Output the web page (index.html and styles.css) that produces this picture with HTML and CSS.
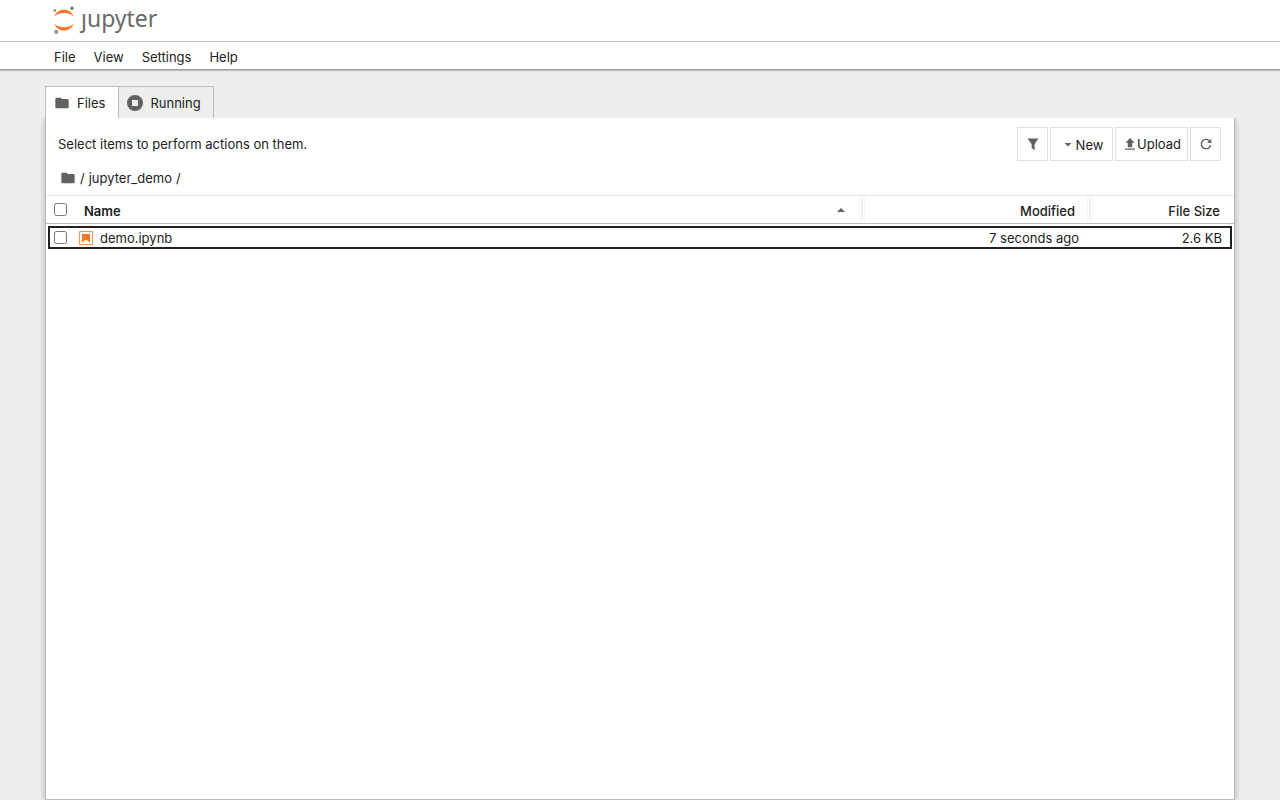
FILE: index.html
```html
<!DOCTYPE html>
<html lang="en">
<head>
<meta charset="utf-8">
<meta name="viewport" content="width=device-width, initial-scale=1">
<title>Home</title>
<link rel="stylesheet" href="styles.css">
</head>
<body>
<header class="top">
  <a class="logo" href="#" aria-label="jupyter">
    <svg class="logo-mark" viewBox="0 0 24 30" width="24" height="30" aria-hidden="true">
      <path fill="#f37726" d="M2.300 11.500C3.700 7.400 7.500 4.700 12 4.700s8.300 2.700 9.700 6.800C19.800 9.300 16.200 8 12 8s-7.800 1.300-9.700 3.500zM2.300 18.800C4.200 21 7.800 22.300 12 22.300s7.800-1.300 9.700-3.500c-1.400 4.100-5.200 6.800-9.700 6.800s-8.300-2.700-9.700-6.800z"/>
      <circle cx="20" cy="3.200" r="1.700" fill="#767677"/>
      <circle cx="2.800" cy="5.400" r="1.200" fill="#767677"/>
      <circle cx="4.200" cy="26.900" r="2.100" fill="#989798"/>
    </svg>
    <span class="logo-text">ȷupyter</span>
  </a>
</header>
<nav class="menu" aria-label="Main menu">
  <button type="button">File</button>
  <button type="button">View</button>
  <button type="button">Settings</button>
  <button type="button">Help</button>
</nav>
<main class="content">
  <div class="tabs" role="tablist">
    <button class="tab tab-current" type="button" role="tab" aria-selected="true">
      <svg viewBox="0 0 24 24" width="16" height="16" aria-hidden="true"><path fill="#616161" d="M10 4H4c-1.100 0-2 .9-2 2v12c0 1.100.9 2 2 2h16c1.100 0 2-.9 2-2V8c0-1.100-.9-2-2-2h-8l-2-2z"/></svg>
      <span>Files</span>
    </button>
    <button class="tab" type="button" role="tab" aria-selected="false">
      <svg viewBox="0 0 16 16" width="16" height="16" aria-hidden="true"><path fill="#616161" fill-rule="evenodd" d="M8 0a8 8 0 1 1 0 16A8 8 0 0 1 8 0zM5 5v6h6V5z"/></svg>
      <span>Running</span>
    </button>
  </div>
  <section class="panel">
    <div class="toolbar">
      <p class="hint">Select items to perform actions on them.</p>
      <div class="actions">
        <button class="action action-icon" type="button" aria-label="Filter">
          <svg viewBox="0 0 12 13" width="12" height="13" aria-hidden="true"><path fill="#616161" d="M.5.500h11L7.600 5.900v6.600L4.600 9.800V5.900z"/></svg>
        </button>
        <button class="action action-new" type="button">
          <svg viewBox="0 0 8 4" width="8" height="4" aria-hidden="true"><path fill="#616161" d="M.5 0h7L4 3.500z"/></svg>
          <span>New</span>
        </button>
        <button class="action action-upload" type="button">
          <svg viewBox="0 0 10 12" width="10" height="12" aria-hidden="true"><path fill="#616161" d="M5 0l4.500 4.800H7.200V9.300H2.800V4.800H.500zM0 10.500h10v1.200H0z"/></svg>
          <span>Upload</span>
        </button>
        <button class="action action-icon" type="button" aria-label="Refresh">
          <svg viewBox="0 0 18 18" width="16" height="16" aria-hidden="true"><path fill="#616161" d="M9 13.500c-2.490 0-4.500-2.010-4.500-4.500S6.510 4.500 9 4.500c1.240 0 2.360.52 3.170 1.330L10 8h5V3l-1.760 1.760A5.980 5.980 0 0 0 9 3C5.690 3 3.010 5.690 3.010 9S5.690 15 9 15a5.970 5.970 0 0 0 5.900-5h-1.520c-.46 2-2.240 3.500-4.380 3.500z"/></svg>
        </button>
      </div>
    </div>
    <nav class="crumbs" aria-label="Breadcrumbs">
      <a href="#" aria-label="Home folder"><svg viewBox="0 0 24 24" width="16" height="16" aria-hidden="true"><path fill="#616161" d="M10 4H4c-1.100 0-2 .9-2 2v12c0 1.100.9 2 2 2h16c1.100 0 2-.9 2-2V8c0-1.100-.9-2-2-2h-8l-2-2z"/></svg></a>
      <span>/</span>
      <a href="#">jupyter_demo</a>
      <span>/</span>
    </nav>
    <table class="listing">
      <colgroup><col><col class="col-modified"><col class="col-size"></colgroup>
      <thead>
        <tr>
          <th scope="col"><div class="head head-name"><input type="checkbox" aria-label="Select all files"><span>Name</span><svg class="sort" viewBox="0 0 8 4" width="8" height="4" aria-hidden="true"><path fill="#616161" d="M0 4h8L4 0z"/></svg><i class="grip"></i></div></th>
          <th scope="col"><div class="head head-modified"><span>Modified</span><i class="grip"></i></div></th>
          <th scope="col"><div class="head head-size"><span>File Size</span></div></th>
        </tr>
      </thead>
      <tbody>
        <tr>
          <td><div class="file"><input type="checkbox" id="demo"><svg viewBox="0 0 14 14" width="14" height="14" aria-hidden="true"><path fill="none" stroke="#f37726" stroke-opacity=".8" d="M.5.500h13v13H.500z"/><path fill="#f37726" d="M3 3h8v8.500L7 8.500l-4 3z"/></svg><label for="demo">demo.ipynb</label></div></td>
          <td class="cell-modified">7 seconds ago</td>
          <td class="cell-size">2.6 KB</td>
        </tr>
      </tbody>
    </table>
  </section>
</main>
</body>
</html>
```
FILE: styles.css
```css
* { box-sizing: border-box; }
body {
  margin: 0;
  min-height: 100vh;
  display: flex;
  flex-direction: column;
  background: #eee;
  color: #212121;
  font: 13px/16px Inter, "Liberation Sans", sans-serif;
}
button { border: 0; background: none; color: inherit; font: inherit; }
a { color: inherit; text-decoration: none; }
svg { display: block; flex: none; }
input { width: 13px; height: 13px; margin: 0; flex: none; }

.top { background: #fff; border-bottom: 1px solid #bdbdbd; padding: 0 52px; }
.logo { display: inline-flex; gap: 5px; height: 41px; padding-top: 5px; vertical-align: top; }
.logo-text { font: 23px/26px "Noto Sans", sans-serif; color: #6a6a6a; }
.menu {
  display: flex;
  background: #fff;
  padding: 0 45px;
  border-bottom: 1px solid #9e9e9e;
  box-shadow: 0 1px 1px #bdbdbd;
}
.menu button { height: 27px; padding: 2px 9px 0; }

.content { flex: 1; display: flex; flex-direction: column; padding: 16px 45px 0; }
.tabs { display: flex; }
.tab {
  display: flex;
  align-items: center;
  gap: 7px;
  height: 32px;
  padding: 0 12px 0 8px;
  border: solid #bdbdbd;
  border-width: 1px 1px 0 0;
}
.tab-current { background: #fff; border-left-width: 1px; padding-right: 13px; }
.panel {
  flex: 1;
  background: #fff;
  border: solid #bdbdbd;
  border-width: 0 1px 1px;
  box-shadow: 0 1px 6px rgba(0, 0, 0, .3);
  clip-path: inset(0 -10px -10px -10px);
}
.toolbar { display: flex; align-items: center; justify-content: space-between; padding: 9px 13px 0 12px; }
.hint { margin: 0; }
.actions { display: flex; gap: 2px; }
.action {
  display: flex;
  align-items: center;
  justify-content: center;
  height: 34px;
  padding: 0;
  border: 1px solid #e0e0e0;
}
.action-icon { width: 31px; }
.action-new { width: 63px; gap: 4px; padding: 2px 0 0 4px; }
.action-upload { width: 73px; gap: 2px; padding-left: 3px; }
.crumbs { display: flex; align-items: center; gap: 4px; padding: 9px 14px; }

.listing { width: 100%; table-layout: fixed; border-spacing: 0; }
.col-modified { width: 228px; }
.col-size { width: 141px; }
th, td { padding: 0; text-align: left; }
th { border: solid #e0e0e0; border-width: 1px 0; border-bottom-color: #bdbdbd; font-weight: 500; }
.head { display: flex; align-items: center; height: 27px; }
.head span { padding-top: 2px; }
.head-name { gap: 17px; padding-left: 8px; font-weight: 600; }
.head-modified, .head-size { justify-content: flex-end; gap: 12px; }
.head-size { padding-right: 14px; }
.sort { margin-left: auto; margin-right: -3px; }
.grip {
  width: 6px;
  height: 27px;
  padding: 2px 1px;
  border: solid #f5f5f5;
  border-width: 0 1px;
  background: #eee content-box;
}
td { height: 27px; }
tbody tr { outline: 2px solid #212121; outline-offset: -4px; }
.file { display: flex; align-items: center; padding-left: 8px; }
.file svg { margin: 0 7px 0 12px; }
.cell-modified { text-align: right; padding: 1px 14px 0 0; }
.cell-size { text-align: right; padding: 1px 12px 0 0; }
```
